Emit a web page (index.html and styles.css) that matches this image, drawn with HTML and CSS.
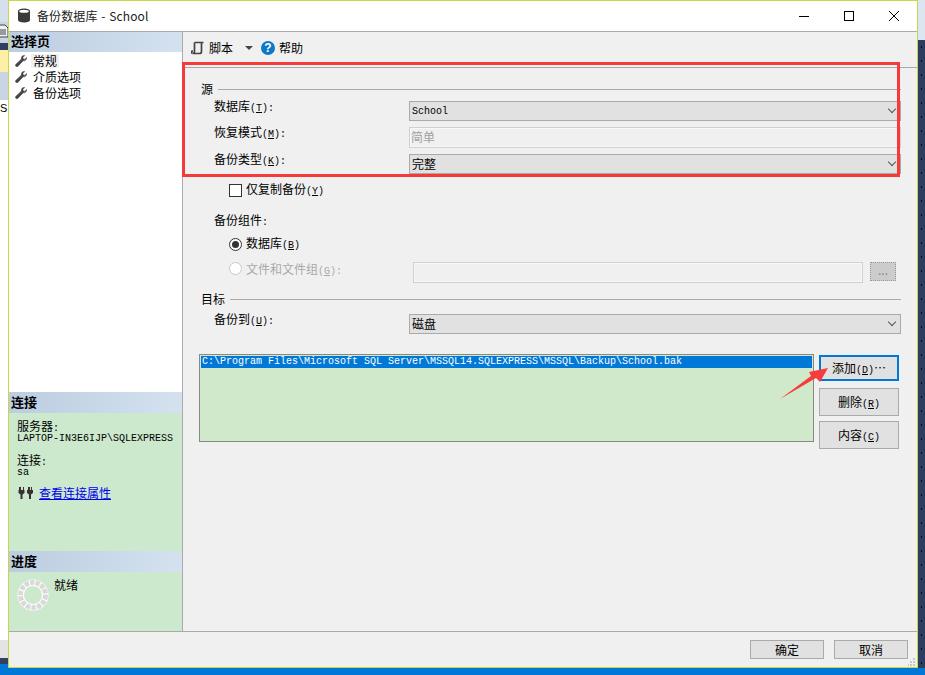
FILE: index.html
```html
<!DOCTYPE html>
<html lang="zh-CN">
<head>
<meta charset="utf-8">
<title>备份数据库 - School</title>
<link rel="stylesheet" href="styles.css">
</head>
<body>
<div class="desktop">
  <div class="bg-left">
    <div class="bl-a"></div>
    <div class="bl-b"><svg width="8" height="14" viewBox="0 0 8 14"><path d="M0 1h5l3 3v9H0" fill="#eef1f4" stroke="#444"/><path d="M0 6h6M0 8h6M0 10h6" stroke="#444"/></svg></div>
    <div class="bl-c"></div>
    <div class="bl-d"></div>
    <div class="bl-e"></div>
    <div class="bl-f"><span class="bl-s">S</span></div>
    <div class="bl-g"></div>
    <div class="bl-h"></div>
  </div>
  <div class="bg-right">
    <div class="br-a"></div>
    <div class="br-b"></div>
  </div>
  <div class="bg-bottom"></div>

  <div class="window">
    <header class="titlebar">
      <svg class="db-icon" width="14" height="15" viewBox="0 0 14 15"><path d="M1 3c0-1.500 2.500-2.500 6-2.500s6 1 6 2.500v9c0 1.500-2.500 2.500-6 2.500s-6-1-6-2.500z" fill="#3a3a3a"/><ellipse cx="7" cy="3.200" rx="4.800" ry="1.500" fill="#fff"/></svg>
      <span class="title">备份数据库 - School</span>
      <div class="winbtns">
        <svg width="12" height="12" viewBox="0 0 12 12"><path d="M1 6.500h10" stroke="#000" fill="none"/></svg>
        <svg width="12" height="12" viewBox="0 0 12 12"><rect x="1.500" y="1.500" width="9" height="9" stroke="#000" fill="none"/></svg>
        <svg width="12" height="12" viewBox="0 0 12 12"><path d="M1 1l10 10M11 1L1 11" stroke="#000" fill="none"/></svg>
      </div>
    </header>
    <div class="body">
      <aside class="sidebar">
        <h2 class="side-head">选择页</h2>
        <nav class="pages">
          <div class="page"><svg class="wrench" width="12" height="12" viewBox="0 0 12 12"><path d="M11.500 2.500c.3 2-1.300 3.700-3.400 3.300L3 11.200c-.7.700-1.500.7-2.100.1s-.6-1.400.1-2.100l5.300-5C5.900 2 7.500.2 9.600.5L7.800 2.400l.5 1.700 1.600.4z" fill="#444" stroke="#444" stroke-width=".6"/></svg><span class="page-on">常规</span></div>
          <div class="page"><svg class="wrench" width="12" height="12" viewBox="0 0 12 12"><path d="M11.500 2.500c.3 2-1.300 3.700-3.400 3.300L3 11.200c-.7.700-1.500.7-2.100.1s-.6-1.400.1-2.100l5.300-5C5.900 2 7.500.2 9.600.5L7.800 2.400l.5 1.700 1.600.4z" fill="#444" stroke="#444" stroke-width=".6"/></svg><span>介质选项</span></div>
          <div class="page"><svg class="wrench" width="12" height="12" viewBox="0 0 12 12"><path d="M11.500 2.500c.3 2-1.300 3.700-3.400 3.300L3 11.200c-.7.700-1.500.7-2.100.1s-.6-1.400.1-2.100l5.300-5C5.900 2 7.500.2 9.600.5L7.800 2.400l.5 1.700 1.600.4z" fill="#444" stroke="#444" stroke-width=".6"/></svg><span>备份选项</span></div>
        </nav>
        <h2 class="side-head">连接</h2>
        <section class="conn">
          <div class="conn-label">服务器<span class="lat">:</span></div>
          <div class="mono">LAPTOP-IN3E6IJP\SQLEXPRESS</div>
          <div class="conn-label conn-gap">连接<span class="lat">:</span></div>
          <div class="mono">sa</div>
          <div class="conn-link">
            <svg width="16" height="14" viewBox="0 0 16 14"><path d="M1 1v3h-.5v3l2 1.500V13h2V8.500l2-1.500V4H6V1H5v3H3V1zM10 1v3H9v3l2 1.500V13h2V8.500L15 7V4h-1V1h-1v3h-1V1z" fill="#3a3034"/></svg>
            <a href="#">查看连接属性</a>
          </div>
        </section>
        <h2 class="side-head">进度</h2>
        <section class="progress">
          <svg class="spinner" width="32" height="32" viewBox="0 0 32 32"><circle cx="16" cy="16" r="15.500" fill="#fff"/><circle cx="16" cy="16" r="12.500" fill="none" stroke="#d9d9d9" stroke-width="5" stroke-dasharray="4.500 1.040"/><circle cx="16" cy="16" r="9.500" fill="#cde9cd" stroke="#fff"/></svg>
          <span>就绪</span>
        </section>
      </aside>
      <main class="main">
        <div class="toolbar">
          <svg width="14" height="14" viewBox="0 0 14 14"><path d="M3.500 1.500h9M3.500 1.500v9c0 1.500-1 2-2 2h7c1 0 2-.5 2-2v-9M1 12.500c-.7-1-.5-2 0-2.500h1" stroke="#444" stroke-width="1.700" fill="none"/></svg>
          <span class="tool-text">脚本</span>
          <span class="caret"></span>
          <svg class="help" width="14" height="14" viewBox="0 0 14 14"><circle cx="7" cy="7" r="7" fill="#0f78c9"/><text x="7" y="11" text-anchor="middle" class="help-q">?</text></svg>
          <span class="tool-text">帮助</span>
        </div>
        <div class="content">
          <div class="legend legend-src"><span>源</span><i></i></div>
          <div class="row row-db"><label>数据库<span class="lat">(<u>T</u>):</span></label><div class="combo mono-val">School<b class="chev"></b></div></div>
          <div class="row row-gap"><label>恢复模式<span class="lat">(<u>M</u>):</span></label><div class="field">简单</div></div>
          <div class="row row-gap"><label>备份类型<span class="lat">(<u>K</u>):</span></label><div class="combo">完整<b class="chev"></b></div></div>
          <div class="check-row"><span class="check"></span><span>仅复制备份<span class="lat">(<u>Y</u>)</span></span></div>
          <div class="sub-label">备份组件<span class="lat">:</span></div>
          <div class="radio-row"><span class="radio on"></span><span>数据库<span class="lat">(<u>B</u>)</span></span></div>
          <div class="radio-row radio-row2 disabled">
            <span class="radio"></span><span class="radio-text">文件和文件组<span class="lat">(<u>G</u>):</span></span>
            <div class="field file-field"></div>
            <div class="dots">...</div>
          </div>
          <div class="legend legend-dst"><span>目标</span><i></i></div>
          <div class="row row-to"><label>备份到<span class="lat">(<u>U</u>):</span></label><div class="combo">磁盘<b class="chev"></b></div></div>
          <div class="dest">
            <div class="listbox"><div class="sel">C:\Program Files\Microsoft SQL Server\MSSQL14.SQLEXPRESS\MSSQL\Backup\School.bak</div></div>
            <div class="side-btns">
              <div class="btn btn-focus">添加<span class="lat">(<u>D</u>)</span>…</div>
              <div class="btn btn-b">删除<span class="lat">(<u>R</u>)</span></div>
              <div class="btn btn-c">内容<span class="lat">(<u>C</u>)</span></div>
            </div>
          </div>
        </div>
      </main>
    </div>
    <footer class="footer">
      <div class="fbtn">确定</div>
      <div class="fbtn">取消</div>
      <svg class="grip" width="8" height="8" viewBox="0 0 8 8"><path d="M5 0h2v2H5zM2 3h2v2H2zM5 3h2v2H5zM0 6h1v2H0zM2 6h2v2H2zM5 6h2v2H5z" fill="#c8c8c8"/></svg>
    </footer>

    <div class="redbox"></div>
    <svg class="arrow" width="52" height="36" viewBox="0 0 52 36"><path d="M2 33L33 10 31 6 50 2 42 16 38 12z" fill="#f63c3c"/></svg>
  </div>
</div>
</body>
</html>
```
FILE: styles.css
```css
* { box-sizing: border-box; }
html, body { margin: 0; padding: 0; }
body {
  width: 925px;
  height: 675px;
  overflow: hidden;
  font: 12px/14px "Noto Sans CJK SC", "Liberation Sans", sans-serif;
  color: #000;
  background: #0078d7;
}
.desktop { position: relative; width: 925px; height: 675px; }

.bg-left { position: absolute; left: 0; top: 0; width: 8px; height: 664px; display: flex; flex-direction: column; }
.bl-a { height: 22px; background: #d6e0ea; }
.bl-b { height: 21px; background: #c9d5e2; }
.bl-b svg { display: block; margin-top: 2px; }
.bl-c { height: 7px; background: #2e4163; }
.bl-d { height: 22px; background: #ffefa6; }
.bl-e { height: 28px; background: #c9d5e2; }
.bl-f { flex: 1; background: #fff; padding-top: 1px; }
.bl-s { display: block; font: 11px/14px "Liberation Sans", sans-serif; }
.bl-g { height: 18px; background: #e4e4e4; }
.bl-h { height: 6px; background: #35405c; }

.bg-right { position: absolute; left: 918px; top: 0; width: 7px; height: 668px; display: flex; flex-direction: column; }
.br-a { height: 40px; background: #dbe6f1; }
.br-b {
  flex: 1;
  background-color: #2c3f60;
  background-image: radial-gradient(circle, #0b0b14 .7px, transparent .8px);
  background-size: 7px 14px;
}
.bg-bottom { position: absolute; left: 0; top: 668px; width: 925px; height: 7px; background: #0078d7; }

.window {
  position: absolute;
  left: 8px;
  top: 0;
  width: 910px;
  height: 668px;
  border: 1px solid #c6d84a;
  background: #f0f0f0;
  display: flex;
  flex-direction: column;
}

.titlebar { height: 31px; background: #fff; display: flex; align-items: center; flex: none; border-bottom: 1px solid #aaa; padding-bottom: 1px; }
.db-icon { margin-left: 8px; }
.title { margin-left: 6px; font: 12px/14px "Noto Sans CJK SC", sans-serif; color: #222; word-spacing: 1px; letter-spacing: .1px; }
.winbtns { margin-left: auto; display: flex; gap: 33px; margin-right: 17px; }

.body { flex: 1; display: flex; min-height: 0; }
.sidebar { width: 174px; flex: none; border-right: 1px solid #aaa; display: flex; flex-direction: column; background: #cde9cd; }
.side-head {
  margin: 0;
  height: 21px;
  padding: 1px 0 0 2px;
  font: bold 13px/17px "Noto Sans CJK SC", sans-serif;
  background: linear-gradient(90deg, #bccde0, #d4e2f0);
  flex: none;
}
.sidebar .side-head:first-child { height: 20px; padding-top: 0; }
.pages { height: 340px; background: #fff; padding-top: 1px; flex: none; }
.page { height: 16px; display: flex; align-items: center; padding-left: 6px; gap: 6px; }
.wrench { flex: none; }
.page-on { background: #f0f0f0; padding: 0 2px; margin-left: -2px; }

.lat { font: 10px/14px "Liberation Mono", monospace; }
.conn { height: 138px; padding: 7px 0 0 8px; flex: none; }
.conn-label { line-height: 12px; height: 13px; }
.mono { font: 10px/11px "Liberation Mono", monospace; }
.conn-gap { margin-top: 10px; }
.conn-link { display: flex; align-items: center; gap: 5px; margin-top: 8px; padding-left: 1px; }
.conn-link a { color: #0000ee; line-height: 14px; }

.progress { flex: 1; display: flex; align-items: flex-start; padding: 7px 0 0 8px; gap: 5px; }
.progress span { margin-top: -1px; }

.main { flex: 1; display: flex; flex-direction: column; min-width: 0; }
.toolbar { height: 36px; flex: none; display: flex; align-items: center; padding: 0 0 3px 8px; border-bottom: 1px solid #aaa; }
.tool-text { margin-left: 4px; }
.caret { width: 0; height: 0; border-left: 4px solid transparent; border-right: 4px solid transparent; border-top: 4px solid #444; margin-left: 12px; }
.help { margin-left: 8px; }
.help-q { font: bold 12px "Liberation Sans", sans-serif; fill: #fff; }

.content { flex: 1; padding: 0 16px 0 18px; }
.legend { display: flex; align-items: center; height: 14px; }
.legend i { flex: 1; height: 1px; background: #aaa; margin-left: 5px; }
.legend-src { margin-top: 14px; }
.legend-dst { margin-top: 9px; }

.row { display: flex; align-items: flex-start; padding-left: 13px; }
.row label { width: 195px; flex: none; margin-top: -2px; }
.row-db { margin-top: 5px; }
.row-gap { margin-top: 6px; }
.row-to { margin-top: 8px; }

.combo {
  flex: 1;
  height: 20px;
  border: 1px solid #aaa;
  background: #e1e1e1;
  padding-left: 2px;
  line-height: 18px;
  position: relative;
}
.mono-val { font: 10px/19px "Liberation Mono", monospace; }
.chev {
  position: absolute;
  right: 5px;
  top: 4px;
  width: 6px;
  height: 6px;
  border-right: 1px solid #555;
  border-bottom: 1px solid #555;
  transform: rotate(45deg);
}
.field {
  flex: 1;
  height: 21px;
  border: 1px solid #d0d0d0;
  background: #f0f0f0;
  box-shadow: inset 0 0 0 1px #f8f8f8;
  color: #a0a0a0;
  padding-left: 1px;
  line-height: 17px;
}

.check-row { display: flex; align-items: center; height: 14px; margin: 9px 0 0 28px; gap: 4px; }
.check { width: 13px; height: 13px; border: 1px solid #333; background: #fff; flex: none; }

.sub-label { height: 14px; margin: 16px 0 0 13px; }

.radio-row { display: flex; align-items: center; height: 14px; margin: 10px 0 0 28px; gap: 4px; }
.radio { width: 13px; height: 13px; border: 1px solid #333; border-radius: 50%; background: #fff; flex: none; position: relative; }
.radio.on::after { content: ""; position: absolute; inset: 2px; border-radius: 50%; background: #333; }
.radio-row2 { margin-top: 11px; height: 21px; align-items: flex-start; }
.disabled { color: #a8a8a8; }
.disabled .radio { border-color: #c8c8c8; }
.radio-text { width: 163px; flex: none; }
.file-field { flex: none; width: 450px; }
.dots {
  width: 26px;
  height: 19px;
  margin-left: 3px;
  border: 1px dotted #999;
  background: #ccc;
  color: #8a8a8a;
  text-align: center;
  line-height: 14px;
  flex: none;
}

.dest { display: flex; margin: 20px 0 0 -2px; }
.listbox { width: 615px; height: 88px; border: 1px solid #888; background: #d0e9cb; padding: 1px; flex: none; }
.sel { height: 12px; background: #0078d7; color: #fff; font: 10px/12px "Liberation Mono", monospace; padding-left: 1px; white-space: nowrap; }
.side-btns { margin: 1px 0 0 5px; width: 80px; }
.btn { border: 1px solid #aaa; background: #e1e1e1; text-align: center; height: 28px; line-height: 26px; }
.btn-focus { border: 2px solid #0078d7; height: 26px; line-height: 22px; }
.btn-b { margin-top: 7px; }
.btn-c { margin-top: 5px; }

.footer { height: 36px; flex: none; border-top: 1px solid #aaa; display: flex; padding: 8px 9px 0 0; justify-content: flex-end; gap: 10px; position: relative; }
.fbtn { width: 74px; height: 19px; border: 1px solid #aaa; background: #e1e1e1; text-align: center; line-height: 17px; }
.grip { position: absolute; right: 1px; bottom: 1px; }

.redbox { position: absolute; left: 173px; top: 61px; width: 718px; height: 115px; border: 3px solid #f63a3a; pointer-events: none; }
.arrow { position: absolute; left: 769px; top: 365px; }
```
